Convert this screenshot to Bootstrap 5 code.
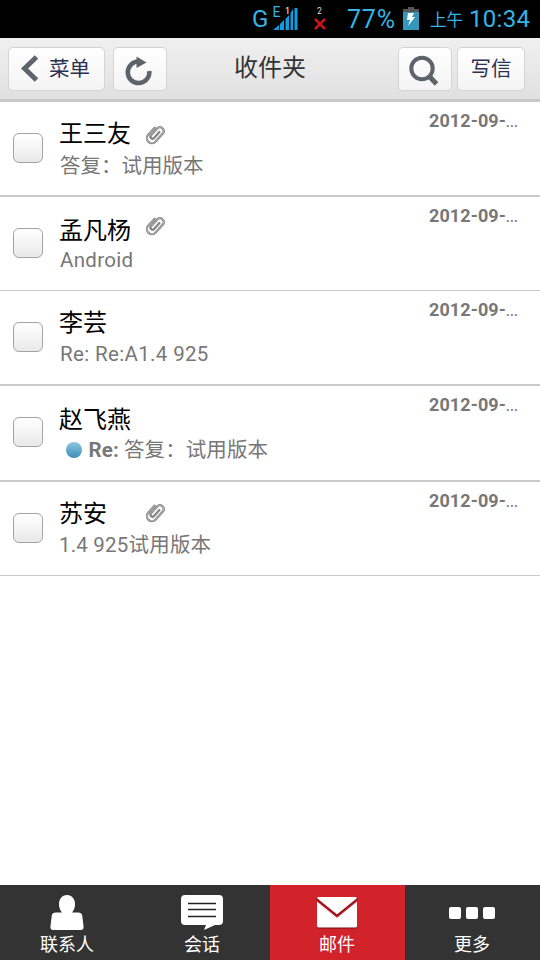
<!DOCTYPE html>
<html lang="zh-CN">
<head>
<meta charset="utf-8">
<meta name="viewport" content="width=device-width, initial-scale=1">
<title>收件夹</title>
<link href="https://cdn.jsdelivr.net/npm/bootstrap@5.3.0/dist/css/bootstrap.min.css" rel="stylesheet">
<style>
body{font-family:Roboto,"Noto Sans CJK SC",sans-serif;width:540px;height:960px;overflow:hidden;background:#fff}
svg{display:block;flex:none}
.status{height:38px;background:#000;color:#33b5e5;line-height:38px;padding-left:252px}
.status span{white-space:nowrap;flex:none}
.st-g{font-size:24px;width:20px}
.st-pct{font-size:25px;width:56px;letter-spacing:.8px;padding-top:1px}
.st-ampm{font-size:16.5px;width:39px;padding-top:2px}
.st-time{font-size:24px;letter-spacing:.3px}
.topbar{height:64px;padding:9px 15px 0 8px;background:linear-gradient(#f0f0f0,#e0e0e0);border-bottom:3px solid #c9c9c9}
.tool{height:44px;border:1px solid #d4d4d6;border-radius:5px;background:linear-gradient(#fff,#f4f4f4);color:#2a3152;font-size:20.5px;line-height:43px;padding:0;flex:none}
.tool-menu{width:97px;padding-left:12px}
.tool-sq{width:54px}
.tool-write{width:68px;margin-left:5px}
.screen-title{font-size:24px;line-height:36px;color:#333;width:232px;padding:3px 0 0 67px}
.mail{height:95px;border-bottom:2px solid #c9c9c9;padding:0 22px 0 14px}
.mail.thin{height:94px;border-bottom-width:1px}
.mail.tall{height:96px}
.pick{appearance:none;width:30px;height:30px;margin:31.4px 15.600px 0 -.6px;border:1px solid #a3a3a3;border-radius:6px;background:linear-gradient(#fff,#e9e9e9);flex:none}
.sender{font-size:24px;line-height:32px;color:#000;width:87px}
.who{height:32px;margin-top:16px}
.who.low{margin-top:18px}
.who.low + .subj{margin-top:-3px}
.clip{margin-top:5px}
.clip-up{margin-top:-1px}
.clip-mid{margin-top:3px}
.subj{font-size:20.5px;line-height:32px;height:32px;color:#777;padding-left:1px;white-space:nowrap}
.who + .subj.latin{margin-top:-1px;letter-spacing:.35px}
.who + .subj.mixed{letter-spacing:.2px}
.who.low + .subj.latin{margin-top:-3px;letter-spacing:.3px}
.who.low + .subj.unread{margin-top:-2px;letter-spacing:.1px}
.when{font-size:18px;font-weight:700;color:#777;line-height:24px;margin-top:7px;width:89px;white-space:nowrap;letter-spacing:.1px}
.when span{font-size:14px;font-weight:500;letter-spacing:.1px}
.dot{width:16px;height:16px;border-radius:50%;background:linear-gradient(#8cc8e2,#3d8cb8);margin:0 7px 0 5.500px}
.tabs{height:75px;margin-top:309px;background:#333}
.tab{width:135px;color:#fff;font-size:18px;line-height:24px;text-decoration:none;padding:9px 1px 0 0}
.tab.on{background:#d2222a}
.tab svg{height:37px;margin-bottom:1.5px}
</style>
<script src="https://cdn.jsdelivr.net/npm/bootstrap@5.3.0/dist/js/bootstrap.bundle.min.js"></script>
</head>
<body>
<svg width="0" height="0" class="position-absolute">
<defs>
<symbol id="clip" viewBox="0 0 20 22"><g fill="none" stroke-linecap="round" stroke-linejoin="round" transform="translate(9.600 11) rotate(42)"><path d="M-5 -4V5.500A5 5 0 0 0 5 5.500V-6A3.900 3.900 0 0 0 -2.500 -6V4A1.800 1.800 0 0 0 1.500 4V-4" stroke="#858585" stroke-width="2.300"/><path d="M-5 -4V5.500A5 5 0 0 0 5 5.500V-6A3.900 3.900 0 0 0 -2.500 -6V4" stroke="#c4c4c4" stroke-width=".7"/></g></symbol>
</defs>
</svg>
<div class="status d-flex">
<span class="st-g">G</span>
<svg width="28" height="38" viewBox="0 0 28 38"><text x="0.500" y="17" font-size="14" fill="#33b5e5">E</text><path d="M1 30L7 25V30ZM8 24L12 20V30H8ZM13.500 19L17 15V30H13.500ZM18.500 13L21 9V30H18.500ZM22.500 8H25.500V30H22.500Z" fill="#0d9de0"/><text x="13" y="14" font-size="9" fill="#fff">1</text></svg>
<svg width="47" height="38" viewBox="0 0 47 38"><text x="17" y="14" font-size="8.500" fill="#ddd">2</text><path d="M15 19L25 29M25 19L15 29" stroke="#c8141b" stroke-width="2.600"/></svg>
<span class="st-pct">77%</span>
<svg width="27" height="38" viewBox="0 0 27 38"><path d="M5 7H11V9H16V13H0V9H5Z" fill="#555"/><path d="M0 12H16V30H0Z" fill="#3697bd"/><path d="M5 13H11L9 17H12L5 26L7 20H4Z" fill="#fff"/></svg>
<span class="st-ampm">上午</span><span class="st-time">10:34</span>
</div>
<nav class="topbar d-flex align-items-start">
<button class="btn tool tool-menu d-flex align-items-center"><svg width="28" height="30" viewBox="0 0 28 30"><path d="M15.500 3L3.500 14.500L15.500 26" fill="none" stroke="#5c636b" stroke-width="5"/></svg>菜单</button>
<button class="btn tool tool-sq ms-2"><svg width="52" height="42" viewBox="0 0 52 42"><path d="M25 13.500A10.800 10.800 0 1 0 35.300 23" fill="none" stroke="#5c636b" stroke-width="4.500"/><path d="M22.500 8.500L32.500 14.500L22.500 20Z" fill="#5c636b"/></svg></button>
<div class="screen-title">收件夹</div>
<button class="btn tool tool-sq ms-auto"><svg width="52" height="42" viewBox="0 0 52 42"><circle cx="23" cy="20.500" r="10.700" fill="none" stroke="#5c636b" stroke-width="4"/><path d="M30 28L37.500 36" stroke="#5c636b" stroke-width="5"/></svg></button>
<button class="btn tool tool-write">写信</button>
</nav>
<main>
<div class="mail d-flex"><input type="checkbox" class="pick"><div class="flex-grow-1"><div class="who d-flex"><span class="sender">王三友</span><svg class="clip" width="20" height="22"><use href="#clip"/></svg></div><div class="subj">答复：试用版本</div></div><div class="when">2012-09-<span>...</span></div></div>
<div class="mail thin d-flex"><input type="checkbox" class="pick"><div class="flex-grow-1"><div class="who low d-flex"><span class="sender">孟凡杨</span><svg class="clip clip-up" width="20" height="22"><use href="#clip"/></svg></div><div class="subj latin">Android</div></div><div class="when">2012-09-<span>...</span></div></div>
<div class="mail d-flex"><input type="checkbox" class="pick"><div class="flex-grow-1"><div class="who d-flex"><span class="sender">李芸</span></div><div class="subj latin">Re: Re:A1.4 925</div></div><div class="when">2012-09-<span>...</span></div></div>
<div class="mail tall d-flex"><input type="checkbox" class="pick"><div class="flex-grow-1"><div class="who low d-flex"><span class="sender">赵飞燕</span></div><div class="subj unread d-flex align-items-center"><i class="dot"></i><b>Re:</b>&nbsp;答复：试用版本</div></div><div class="when">2012-09-<span>...</span></div></div>
<div class="mail thin d-flex"><input type="checkbox" class="pick"><div class="flex-grow-1"><div class="who d-flex"><span class="sender">苏安</span><svg class="clip clip-mid" width="20" height="22"><use href="#clip"/></svg></div><div class="subj latin mixed ps-0">1.4 925试用版本</div></div><div class="when">2012-09-<span>...</span></div></div>
</main>
<footer class="tabs d-flex">
<a class="tab d-flex flex-column align-items-center" href="#"><svg width="34" height="37" viewBox="0 0 34 37"><path d="M17 1C22 1 25 5 25 10C25 13.500 24 16.500 22 18.500H28C31 18.500 32 20 32.300 22L33.500 32C33.800 35 33 36 30 36H4C1 36 .2 35 .5 32L1.700 22C2 20 3 18.500 6 18.500H12C10 16.500 9 13.500 9 10C9 5 12 1 17 1Z" fill="#fff"/></svg>联系人</a>
<a class="tab d-flex flex-column align-items-center" href="#"><svg width="42" height="37" viewBox="0 0 42 37"><path d="M4 1H38Q42 1 42 5V27Q42 31 38 31H34L23 36L25 31H4Q0 31 0 27V5Q0 1 4 1Z" fill="#fff"/><path d="M7 9.500H35M7 15.500H35M7 22.500H35" stroke="#222" stroke-width="1.500"/></svg>会话</a>
<a class="tab on d-flex flex-column align-items-center" href="#"><svg width="42" height="37" viewBox="0 0 42 37"><rect x="1" y="4" width="40" height="30.500" rx="1.500" fill="#6b1015"/><rect x="1" y="3" width="40" height="30.500" rx="1.500" fill="#fff"/><path d="M0 5L21 22L42 5" fill="none" stroke="#c51d26" stroke-width="2.600"/><path d="M0 4.500L21 21.500L42 4.500" fill="none" stroke="#5a1115" stroke-width=".8"/></svg>邮件</a>
<a class="tab d-flex flex-column align-items-center" href="#"><svg width="46" height="37" viewBox="0 0 46 37"><g fill="#fff"><rect y="13" width="12" height="12" rx="2"/><rect x="17" y="13" width="12" height="12" rx="2"/><rect x="34" y="13" width="12" height="12" rx="2"/></g></svg>更多</a>
</footer>
</body>
</html>
